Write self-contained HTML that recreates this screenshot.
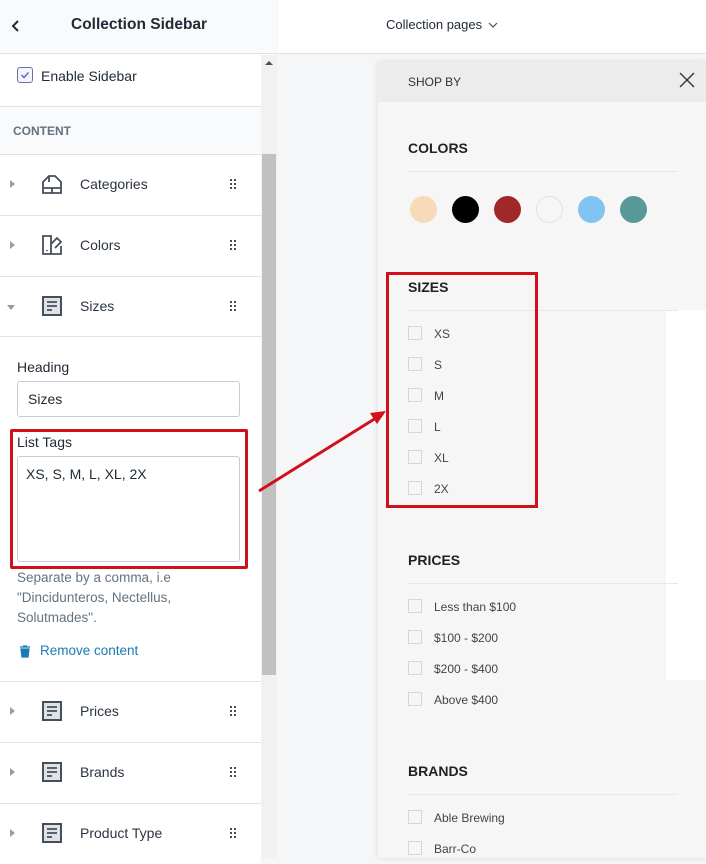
<!DOCTYPE html>
<html><head><meta charset="utf-8"><style>
*{box-sizing:border-box;margin:0;padding:0}
body{width:706px;height:858px;overflow:hidden;position:relative;font-family:"Liberation Sans",sans-serif;background:#f4f6f8;color:#212b36}
.a{position:absolute}
.row{position:absolute;left:0;width:261px;height:61px;background:#fff;border-top:1px solid #dfe3e8;font-size:14px}
.row .tri{position:absolute;left:10px;top:25px;width:0;height:0;border-left:5px solid #919eab;border-top:4px solid transparent;border-bottom:4px solid transparent}
.row .lbl{position:absolute;left:80px;top:21px;color:#2b3440}
.row .drag{position:absolute;left:230px;top:24px}
.row svg.ic{position:absolute;left:41px;top:18px}
.cb{position:absolute;left:408px;width:14px;height:14px;border:1px solid #d6d6d6;background:#f6f6f6}
.ct{position:absolute;left:434px;font-size:12px;color:#444}
.h{position:absolute;left:408px;font-size:14px;font-weight:bold;color:#222}
.hr{position:absolute;left:408px;width:270px;height:1px;background:#e8e8e8}
.dot{position:absolute;top:196px;width:27px;height:27px;border-radius:50%}
</style></head><body>
<div class="a" style="left:278px;top:0;width:428px;height:54px;background:#fff;border-bottom:1px solid #dfe3e8"></div>
<div class="a" style="left:386px;top:17px;font-size:13px;color:#212b36">Collection pages <svg width="10" height="8" viewBox="0 0 10 8" style="margin-left:2px"><path d="M1 2l4 4 4-4" fill="none" stroke="#454f5b" stroke-width="1.2"/></svg></div>
<div class="a" style="left:0;top:0;width:277px;height:858px;background:#fff;border-right:1px solid #dfe3e8"></div>
<div class="a" style="left:0;top:0;width:277px;height:54px;background:#f9fafb;border-bottom:1px solid #dfe3e8"></div>
<svg class="a" style="left:11px;top:19px" width="10" height="14" viewBox="0 0 10 14"><path d="M7 2L2 7l5 5" fill="none" stroke="#212b36" stroke-width="2"/></svg>
<div class="a" style="left:71px;top:16px;font-size:15.5px;font-weight:bold;color:#212b36">Collection Sidebar</div>
<div class="a" style="left:17px;top:67px;width:16px;height:16px;border:1px solid #6b6fa8;border-radius:3px;background:#f4f5fa"></div>
<svg class="a" style="left:19px;top:69px" width="12" height="12" viewBox="0 0 12 12"><path d="M2.5 6l2.5 2.5 4.5-5" fill="none" stroke="#5c6ac4" stroke-width="1.5"/></svg>
<div class="a" style="left:41px;top:68px;font-size:14px">Enable Sidebar</div>
<div class="a" style="left:0;top:106px;width:261px;height:48px;background:#f9fafb;border-top:1px solid #dfe3e8"></div>
<div class="a" style="left:13px;top:124px;font-size:12px;font-weight:bold;color:#637381">CONTENT</div>

<div class="row" style="top:154px"><div class="tri"></div><svg class="ic" width="22" height="22" viewBox="0 0 22 22"><path d="M2 20V9l6-6h6l6 6v11zM2 15h18M11 15v5M8 3v6" fill="none" stroke="#454f5b" stroke-width="1.8"/></svg><div class="lbl">Categories</div><svg class="drag" width="6" height="10"><g fill="#454f5b"><rect x="0" y="0" width="2" height="2"/><rect x="4" y="0" width="2" height="2"/><rect x="0" y="4" width="2" height="2"/><rect x="4" y="4" width="2" height="2"/><rect x="0" y="8" width="2" height="2"/><rect x="4" y="8" width="2" height="2"/></g></svg></div>
<div class="row" style="top:215px"><div class="tri"></div><svg class="ic" width="22" height="22" viewBox="0 0 22 22"><path d="M2 2h8v18H2zM10 10l6-6 4 4-6 6M10 20h10v-8M6 16v1" fill="none" stroke="#454f5b" stroke-width="1.8"/></svg><div class="lbl">Colors</div><svg class="drag" width="6" height="10"><g fill="#454f5b"><rect x="0" y="0" width="2" height="2"/><rect x="4" y="0" width="2" height="2"/><rect x="0" y="4" width="2" height="2"/><rect x="4" y="4" width="2" height="2"/><rect x="0" y="8" width="2" height="2"/><rect x="4" y="8" width="2" height="2"/></g></svg></div>
<div class="row" style="top:276px"><div class="tri" style="left:7px;top:28px;border-top:5px solid #919eab;border-left:4px solid transparent;border-right:4px solid transparent;border-bottom:0"></div><svg class="ic" width="22" height="22" viewBox="0 0 22 22"><rect x="2" y="2" width="18" height="18" fill="#dfe3e8" stroke="#454f5b" stroke-width="2"/><path d="M6 7h10M6 11h10M6 15h5" stroke="#454f5b" stroke-width="1.8"/></svg><div class="lbl">Sizes</div><svg class="drag" width="6" height="10"><g fill="#454f5b"><rect x="0" y="0" width="2" height="2"/><rect x="4" y="0" width="2" height="2"/><rect x="0" y="4" width="2" height="2"/><rect x="4" y="4" width="2" height="2"/><rect x="0" y="8" width="2" height="2"/><rect x="4" y="8" width="2" height="2"/></g></svg></div>
<div class="a" style="left:0;top:336px;width:261px;height:1px;background:#dfe3e8"></div>
<div class="a" style="left:17px;top:359px;font-size:14px">Heading</div>
<div class="a" style="left:17px;top:381px;width:223px;height:36px;border:1px solid #c4cdd5;border-radius:3px;padding:9px 10px;font-size:14px">Sizes</div>
<div class="a" style="left:17px;top:434px;font-size:14px">List Tags</div>
<div class="a" style="left:17px;top:456px;width:223px;height:106px;border:1px solid #c4cdd5;border-radius:3px;padding:9px 8px;font-size:14px">XS, S, M, L, XL, 2X</div>
<div class="a" style="left:10px;top:429px;width:238px;height:140px;border:3px solid #d0101a;border-radius:2px"></div>
<div class="a" style="left:17px;top:568px;font-size:13.5px;line-height:20px;color:#637381;width:200px">Separate by a comma, i.e "Dincidunteros, Nectellus, Solutmades".</div>
<svg class="a" style="left:19px;top:645px" width="12" height="13" viewBox="0 0 12 13"><path d="M1 2h10M4 1h4M2 4h8l-1 8H3z" fill="#1a7ab5" stroke="#1a7ab5" stroke-width="1.2"/></svg>
<div class="a" style="left:40px;top:643px;font-size:13.5px;color:#1a7ab5">Remove content</div>
<div class="row" style="top:681px"><div class="tri"></div><svg class="ic" width="22" height="22" viewBox="0 0 22 22"><rect x="2" y="2" width="18" height="18" fill="#dfe3e8" stroke="#454f5b" stroke-width="2"/><path d="M6 7h10M6 11h10M6 15h5" stroke="#454f5b" stroke-width="1.8"/></svg><div class="lbl">Prices</div><svg class="drag" width="6" height="10"><g fill="#454f5b"><rect x="0" y="0" width="2" height="2"/><rect x="4" y="0" width="2" height="2"/><rect x="0" y="4" width="2" height="2"/><rect x="4" y="4" width="2" height="2"/><rect x="0" y="8" width="2" height="2"/><rect x="4" y="8" width="2" height="2"/></g></svg></div>
<div class="row" style="top:742px"><div class="tri"></div><svg class="ic" width="22" height="22" viewBox="0 0 22 22"><rect x="2" y="2" width="18" height="18" fill="#dfe3e8" stroke="#454f5b" stroke-width="2"/><path d="M6 7h10M6 11h10M6 15h5" stroke="#454f5b" stroke-width="1.8"/></svg><div class="lbl">Brands</div><svg class="drag" width="6" height="10"><g fill="#454f5b"><rect x="0" y="0" width="2" height="2"/><rect x="4" y="0" width="2" height="2"/><rect x="0" y="4" width="2" height="2"/><rect x="4" y="4" width="2" height="2"/><rect x="0" y="8" width="2" height="2"/><rect x="4" y="8" width="2" height="2"/></g></svg></div>
<div class="row" style="top:803px"><div class="tri"></div><svg class="ic" width="22" height="22" viewBox="0 0 22 22"><rect x="2" y="2" width="18" height="18" fill="#dfe3e8" stroke="#454f5b" stroke-width="2"/><path d="M6 7h10M6 11h10M6 15h5" stroke="#454f5b" stroke-width="1.8"/></svg><div class="lbl">Product Type</div><svg class="drag" width="6" height="10"><g fill="#454f5b"><rect x="0" y="0" width="2" height="2"/><rect x="4" y="0" width="2" height="2"/><rect x="0" y="4" width="2" height="2"/><rect x="4" y="4" width="2" height="2"/><rect x="0" y="8" width="2" height="2"/><rect x="4" y="8" width="2" height="2"/></g></svg></div>
<div class="a" style="left:261px;top:55px;width:16px;height:803px;background:#f1f1f1"></div>
<div class="a" style="left:265px;top:61px;width:0;height:0;border-bottom:4px solid #505050;border-left:4px solid transparent;border-right:4px solid transparent"></div>
<div class="a" style="left:262px;top:154px;width:14px;height:521px;background:#c1c1c1"></div>
<div class="a" style="left:378px;top:62px;width:328px;height:796px;background:#f6f6f6;box-shadow:0 0 6px rgba(0,0,0,.12)"></div>
<div class="a" style="left:378px;top:62px;width:328px;height:40px;background:#ececec"></div>
<div class="a" style="left:408px;top:75px;font-size:12px;color:#333">SHOP BY</div>
<svg class="a" style="left:679px;top:72px" width="16" height="16" viewBox="0 0 16 16"><path d="M1 1l14 14M15 1L1 15" stroke="#333" stroke-width="1.4"/></svg>
<div class="a" style="left:666px;top:310px;width:40px;height:370px;background:#fff"></div>
<div class="h" style="top:140px">COLORS</div><div class="hr" style="top:171px"></div>
<div class="dot" style="left:410px;background:#f8dab8"></div>
<div class="dot" style="left:452px;background:#000"></div>
<div class="dot" style="left:494px;background:#a1282a"></div>
<div class="dot" style="left:536px;background:#f6f6f6;border:1px solid #e0e0e0"></div>
<div class="dot" style="left:578px;background:#7fc4f2"></div>
<div class="dot" style="left:620px;background:#589a98"></div>
<div class="h" style="top:279px">SIZES</div><div class="hr" style="top:310px"></div>
<div class="cb" style="top:326px"></div><div class="ct" style="top:327px">XS</div>
<div class="cb" style="top:357px"></div><div class="ct" style="top:358px">S</div>
<div class="cb" style="top:388px"></div><div class="ct" style="top:389px">M</div>
<div class="cb" style="top:419px"></div><div class="ct" style="top:420px">L</div>
<div class="cb" style="top:450px"></div><div class="ct" style="top:451px">XL</div>
<div class="cb" style="top:481px"></div><div class="ct" style="top:482px">2X</div>
<div class="a" style="left:386px;top:272px;width:152px;height:236px;border:3px solid #d0101a"></div>
<div class="h" style="top:552px">PRICES</div><div class="hr" style="top:583px"></div>
<div class="cb" style="top:599px"></div><div class="ct" style="top:600px">Less than $100</div>
<div class="cb" style="top:630px"></div><div class="ct" style="top:631px">$100 - $200</div>
<div class="cb" style="top:661px"></div><div class="ct" style="top:662px">$200 - $400</div>
<div class="cb" style="top:692px"></div><div class="ct" style="top:693px">Above $400</div>
<div class="h" style="top:763px">BRANDS</div><div class="hr" style="top:794px"></div>
<div class="cb" style="top:810px"></div><div class="ct" style="top:811px">Able Brewing</div>
<div class="cb" style="top:841px"></div><div class="ct" style="top:842px">Barr-Co</div>
<svg class="a" style="left:0;top:0" width="706" height="858"><path d="M259 491L376 418" stroke="#d0101a" stroke-width="3"/><path d="M386 411l-16 2 7 11z" fill="#d0101a"/></svg>
</body></html>
